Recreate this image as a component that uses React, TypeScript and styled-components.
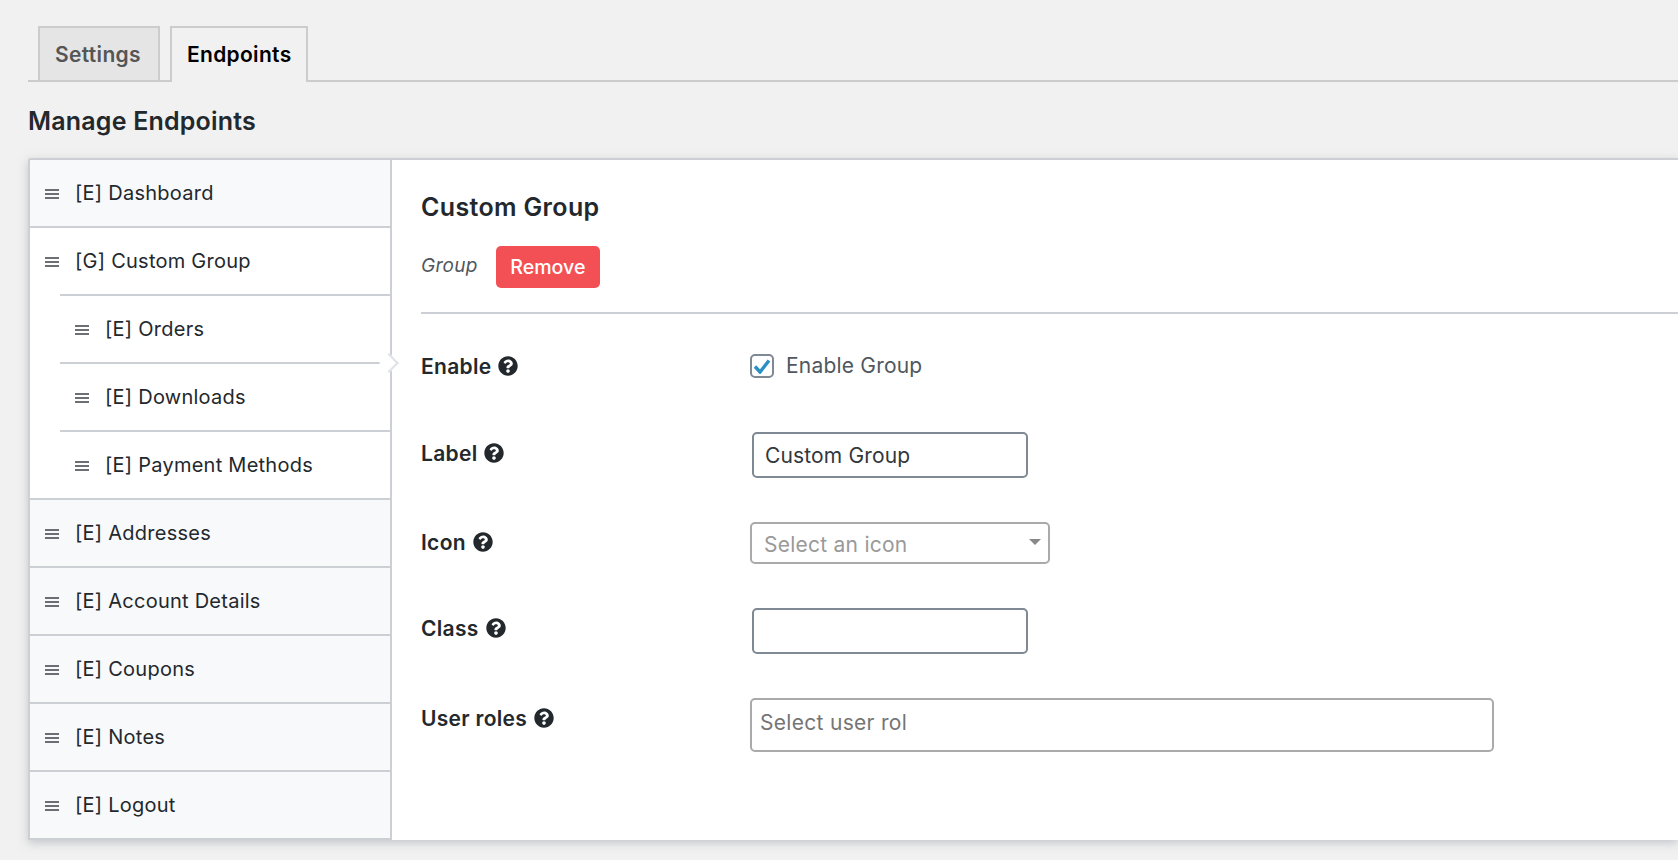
import React from "react";
import styled, { createGlobalStyle } from "styled-components";
import { FaQuestionCircle } from "react-icons/fa";

const Global = createGlobalStyle`
  html, body { margin: 0; padding: 0; height: 100%; overflow: hidden; background: #f1f1f1; }
  body { font-family: Inter, "Liberation Sans", sans-serif; color: #23282d; }
  * { box-sizing: border-box; }
`;

const Page = styled.div`
  width: 1678px;
  height: 860px;
  padding: 26px 0 0 28px;
  overflow: hidden;
`;

const TabBar = styled.div`
  display: flex;
  align-items: flex-end;
  gap: 10px;
  height: 56px;
  padding-left: 10px;
  border-bottom: 2px solid #ccc;
`;

const Tab = styled.div<{ $active?: boolean }>`
  height: ${(p) => (p.$active ? "56px" : "54px")};
  margin-bottom: ${(p) => (p.$active ? "-2px" : "0")};
  padding: ${(p) => (p.$active ? "0 14px 0 15px" : "0 17px 0 15px")};
  border: 2px solid #ccc;
  border-bottom: ${(p) => (p.$active ? "none" : "0")};
  background: ${(p) => (p.$active ? "#f1f1f1" : "#e5e5e5")};
  color: ${(p) => (p.$active ? "#000" : "#555")};
  font-size: 21px;
  font-weight: 600;
  letter-spacing: 0.33px;
  line-height: 54px;
`;

const Heading = styled.h2`
  margin: 22px 0 20px;
  font-size: 25px;
  letter-spacing: 0.2px;
  line-height: 34px;
  font-weight: 600;
  color: #23282d;
`;

const Panel = styled.div`
  display: flex;
  height: 682px;
  background: #fff;
  border-top: 2px solid #ccd0d4;
  border-left: 2px solid #ccd0d4;
  border-top-left-radius: 3px;
  box-shadow: 0 3px 10px rgba(150, 155, 165, 0.5);
`;

const Side = styled.ul`
  position: relative;
  list-style: none;
  margin: 0;
  padding: 0;
  width: 362px;
  flex: none;
  border-right: 2px solid #ccd0d4;
`;

const Row = styled.li<{ $indent?: boolean; $white?: boolean; $lineLeft: number; $lineRight: number }>`
  position: relative;
  display: flex;
  align-items: center;
  gap: 16px;
  height: 68px;
  padding: 0 0 2px ${(p) => (p.$indent ? "45px" : "15px")};
  background: ${(p) => (p.$white ? "#fff" : "#f8f9fb")};
  font-size: 20px;
  letter-spacing: 0.25px;
  color: #23282d;
  &::after {
    content: "";
    position: absolute;
    left: ${(p) => p.$lineLeft}px;
    right: ${(p) => p.$lineRight}px;
    bottom: 0;
    height: 2px;
    background: #ccd0d4;
  }
`;

const Pointer = styled.span`
  position: absolute;
  left: 352px;
  top: 196px;
  width: 14px;
  height: 14px;
  background: #fff;
  border-top: 2px solid #dfe2e6;
  border-right: 2px solid #dfe2e6;
  transform: rotate(45deg);
`;

const Main = styled.div`
  flex: 1;
  padding: 28px 0 0 29px;
  min-width: 0;
`;

const Title = styled.h3`
  margin: 0 0 20px;
  font-size: 25px;
  letter-spacing: 0.35px;
  line-height: 38px;
  font-weight: 600;
  color: #23282d;
`;

const MetaRow = styled.div`
  display: flex;
  align-items: center;
  gap: 18px;
  height: 42px;
  margin-bottom: 24px;
`;

const Kind = styled.em`
  font-size: 19px;
  letter-spacing: 0.3px;
  color: #50575e;
  margin-top: -4px;
`;

const RemoveButton = styled.button`
  width: 104px;
  height: 42px;
  padding: 0;
  border: 0;
  border-radius: 5px;
  background: #f35055;
  color: #fff;
  font: 500 19.6px Inter, "Liberation Sans", sans-serif;
`;

const Divider = styled.hr`
  margin: 0 0 40px;
  border: 0;
  border-top: 2px solid #ccd0d4;
`;

const FormRow = styled.div<{ $h: number }>`
  display: grid;
  grid-template-columns: 329px 1fr;
  height: ${(p) => p.$h}px;
`;

const FieldLabel = styled.div<{ $top: number }>`
  display: flex;
  align-items: center;
  gap: 7px;
  height: 26px;
  margin-top: ${(p) => p.$top}px;
  font-size: 21px;
  font-weight: 600;
  letter-spacing: 0.3px;
  color: #23282d;
  svg { font-size: 20px; }
`;

const CheckLine = styled.label`
  display: flex;
  align-items: center;
  gap: 12px;
  height: 24px;
  font-size: 21px;
  letter-spacing: 0.2px;
  color: #50575e;
`;

const CheckText = styled.span`
  margin-top: -2px;
`;

const CheckBox = styled.span`
  display: flex;
  align-items: center;
  justify-content: center;
  width: 24px;
  height: 24px;
  border: 2px solid #7e8993;
  border-radius: 5px;
  background: #fff;
`;

const TextInput = styled.input`
  display: block;
  width: 276px;
  height: 46px;
  margin-left: 2px;
  padding: 0 11px;
  border: 2px solid #7e8993;
  border-radius: 5px;
  background: #fff;
  color: #32373c;
  font: 400 21px Inter, "Liberation Sans", sans-serif;
  letter-spacing: 0.15px;
  outline: none;
`;

const SelectBox = styled.div`
  position: relative;
  width: 300px;
  height: 42px;
  padding-left: 12px;
  border: 2px solid #aaa;
  border-radius: 5px;
  background: #fff;
  color: #999;
  font-size: 21px;
  letter-spacing: 0.25px;
  line-height: 41px;
`;

const Caret = styled.span`
  position: absolute;
  right: 7px;
  top: 15px;
  border-top: 6px solid #888;
  border-left: 6px solid transparent;
  border-right: 6px solid transparent;
`;

const RolesInput = styled.input`
  display: block;
  width: 744px;
  height: 54px;
  padding: 0 8px 5px;
  border: 2px solid #aaa;
  border-radius: 5px;
  background: #fff;
  font: 400 21px Inter, "Liberation Sans", sans-serif;
  letter-spacing: 0.3px;
  outline: none;
  &::placeholder { color: #757575; opacity: 1; }
`;

const Grip = () => (
  <svg width="14" height="10" viewBox="0 0 14 10" style={{ flex: "none", marginTop: 1 }}>
    <path d="M0 1h14M0 5h14M0 9h14" stroke="#3c4248" strokeWidth="1.5" />
  </svg>
);

const items: { t: string; indent?: boolean; white?: boolean; left?: number; right?: number }[] = [
  { t: "[E] Dashboard" },
  { t: "[G] Custom Group", white: true, left: 30 },
  { t: "[E] Orders", indent: true, white: true, left: 30, right: 10 },
  { t: "[E] Downloads", indent: true, white: true, left: 30 },
  { t: "[E] Payment Methods", indent: true, white: true },
  { t: "[E] Addresses" },
  { t: "[E] Account Details" },
  { t: "[E] Coupons" },
  { t: "[E] Notes" },
  { t: "[E] Logout" },
];

export default function App() {
  return (
    <Page>
      <Global />
      <TabBar>
        <Tab>Settings</Tab>
        <Tab $active>Endpoints</Tab>
      </TabBar>
      <Heading>Manage Endpoints</Heading>
      <Panel>
        <Side>
          {items.map((i) => (
            <Row key={i.t} $indent={i.indent} $white={i.white} $lineLeft={i.left ?? 0} $lineRight={i.right ?? 0}>
              <Grip />
              {i.t}
            </Row>
          ))}
          <Pointer />
        </Side>
        <Main>
          <Title>Custom Group</Title>
          <MetaRow>
            <Kind>Group</Kind>
            <RemoveButton>Remove</RemoveButton>
          </MetaRow>
          <Divider />
          <FormRow $h={78}>
            <FieldLabel $top={-1}>Enable <FaQuestionCircle /></FieldLabel>
            <CheckLine>
              <CheckBox>
                <svg width="18" height="16" viewBox="0 0 18 16">
                  <path d="M2 8.5l5 5.5L16 2.5" fill="none" stroke="#2a8fc4" strokeWidth="3.4" />
                </svg>
              </CheckBox>
              <CheckText>Enable Group</CheckText>
            </CheckLine>
          </FormRow>
          <FormRow $h={90}>
            <FieldLabel $top={8}>Label <FaQuestionCircle /></FieldLabel>
            <TextInput defaultValue="Custom Group" readOnly />
          </FormRow>
          <FormRow $h={86}>
            <FieldLabel $top={7}>Icon <FaQuestionCircle /></FieldLabel>
            <SelectBox>Select an icon<Caret /></SelectBox>
          </FormRow>
          <FormRow $h={90}>
            <FieldLabel $top={7}>Class <FaQuestionCircle /></FieldLabel>
            <TextInput readOnly />
          </FormRow>
          <FormRow $h={60}>
            <FieldLabel $top={7}>User roles <FaQuestionCircle /></FieldLabel>
            <RolesInput placeholder="Select user rol" readOnly />
          </FormRow>
        </Main>
      </Panel>
    </Page>
  );
}
